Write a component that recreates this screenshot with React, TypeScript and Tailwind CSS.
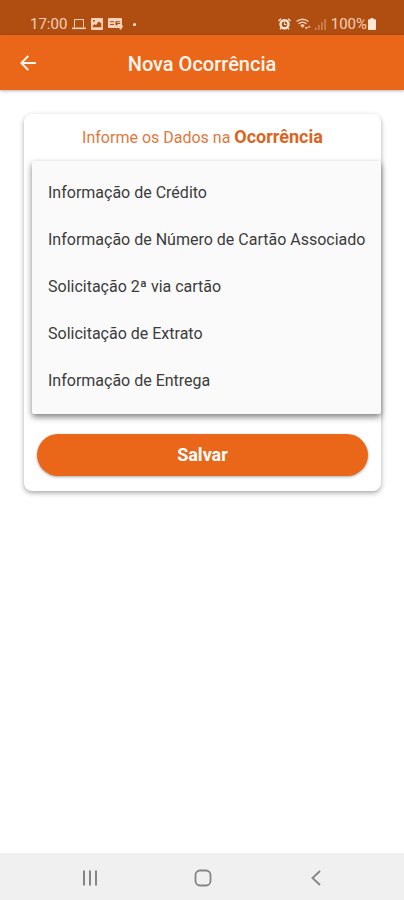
const options = [
  "Informação de Crédito",
  "Informação de Número de Cartão Associado",
  "Solicitação 2ª via cartão",
  "Solicitação de Extrato",
  "Informação de Entrega",
];

function StatusBar() {
  return (
    <div className="flex h-[35px] items-end justify-between bg-[#b04d10] pr-7 pb-[3px] pl-[30px] text-[#f8d2ba]">
      <div className="flex items-center">
        <span className="text-[15px] leading-4">17:00</span>
        {/* laptop */}
        <svg className="ml-[5px] h-3 w-[14px]" viewBox="0 0 14 12" fill="none" stroke="currentColor">
          <path d="M2.5 9V1.5h9V9" />
          <path d="M0 10.3h14" strokeWidth="1.6" />
        </svg>
        {/* picture */}
        <svg className="ml-[5px] h-3 w-3" viewBox="0 0 12 12" fill="currentColor">
          <path
            fillRule="evenodd"
            d="M1 0h10a1 1 0 0 1 1 1v10a1 1 0 0 1-1 1H1a1 1 0 0 1-1-1V1a1 1 0 0 1 1-1ZM1.7 9.3h8.6V5.2L7.4 3.4 5 7.2 3.5 6 1.7 8ZM2 2v1.6h1.8V2Z"
          />
        </svg>
        {/* news card */}
        <svg className="ml-[5px] h-3 w-[15px]" viewBox="0 0 15 12" fill="currentColor">
          <path
            fillRule="evenodd"
            d="M1 0h12a1 1 0 0 1 1 1v6l1 1-2 4-2-2H1a1 1 0 0 1-1-1V1a1 1 0 0 1 1-1ZM2 3.2v1h4v-1ZM2 6v1h4V6ZM7.5 3.2v4h2V6h2.7V4.8H9V4h3.2v-.8Z"
          />
        </svg>
        <span className="ml-[10px] size-[3px] rounded-full bg-[#ffe6d6]" />
      </div>
      <div className="flex items-center">
        {/* alarm clock */}
        <svg className="h-3 w-[13px]" viewBox="0 0 13 12" fill="#ffe6d6">
          <path d="M0 2.4 2.6.2l.9 1L.9 3.4ZM13 2.4 10.4.2l-.9 1 2.6 2.2ZM2.6 9.6l1.1 1-1.2 1.2-1-1ZM10.4 9.6l-1.1 1 1.2 1.2 1-1Z" />
          <path
            fillRule="evenodd"
            d="M6.5 1a5.2 5.2 0 1 1 0 10.4A5.2 5.2 0 0 1 6.5 1Zm0 2.4a2.8 2.8 0 1 0 0 5.6 2.8 2.8 0 0 0 0-5.6ZM6 4.2h1v1.7h1.4v1H6Z"
          />
        </svg>
        {/* wifi */}
        <svg className="ml-[5px] h-3 w-[15px]" viewBox="0 0 15 12" fill="none" stroke="currentColor" strokeWidth="1.4">
          <path d="M.6 3.6a8.6 8.6 0 0 1 11.8 0M2.6 5.7a5.8 5.8 0 0 1 7.8 0" />
          <path d="M4.3 7.2a3.4 3.4 0 0 1 4.4 0L6.5 10Z" fill="currentColor" stroke="none" />
          <path d="M8.8 9l1.6 2.4L12 9ZM11.8 9.5l1.4-2 1.4 2Z" fill="currentColor" stroke="none" />
        </svg>
        {/* signal bars */}
        <svg className="ml-[4px] h-3 w-3 text-[#cf8557]" viewBox="0 0 12 12" fill="currentColor">
          <path d="M0 9.5h1.6V12H0ZM3.1 7h1.6v5H3.1ZM6.2 4h1.6v8H6.2ZM9.3 1h1.6v11H9.3Z" />
        </svg>
        <span className="ml-1 text-[15px] leading-4">100%</span>
        {/* battery */}
        <svg className="ml-px h-3 w-2" viewBox="0 0 8 12" fill="#ffe6d6">
          <path d="M2.5 0h3v1.3H7a1 1 0 0 1 1 1V11a1 1 0 0 1-1 1H1a1 1 0 0 1-1-1V2.3a1 1 0 0 1 1-1h1.5Z" />
        </svg>
      </div>
    </div>
  );
}

function Header() {
  return (
    <header className="grid h-[55px] grid-cols-[56px_1fr_56px] items-center bg-[#ea671a] text-[#fff6ef] shadow-[0_1px_3px_rgba(0,0,0,0.3)]">
      <button type="button" aria-label="Voltar" className="flex h-full items-center justify-center">
        <svg className="size-4" viewBox="0 0 16 16" fill="none" stroke="currentColor" strokeWidth="2">
          <path d="M16 8H1.5M8.2 1 1.3 8l6.9 7" />
        </svg>
      </button>
      <h1 className="pt-[3px] text-center text-xl leading-6 font-medium">Nova Ocorrência</h1>
    </header>
  );
}

function NavBar() {
  return (
    <nav className="grid h-[47px] grid-cols-[1fr_113px_113px_113px_1fr] items-center bg-[#f0f0f0] pt-[3px] pl-[2px] text-[#858585]">
      <button type="button" aria-label="Recentes" className="col-start-2 flex justify-center">
        <svg className="h-4 w-4" viewBox="0 0 16 16" fill="none" stroke="currentColor" strokeWidth="2">
          <path d="M2 .5v15M8 .5v15M14 .5v15" />
        </svg>
      </button>
      <button type="button" aria-label="Início" className="flex justify-center">
        <svg className="size-[18px]" viewBox="0 0 18 18" fill="none" stroke="currentColor" strokeWidth="1.8">
          <rect x="1.5" y="1.5" width="15" height="15" rx="4.5" />
        </svg>
      </button>
      <button type="button" aria-label="Voltar" className="flex justify-center">
        <svg className="h-4 w-[10px]" viewBox="0 0 10 16" fill="none" stroke="currentColor" strokeWidth="1.8">
          <path d="M9 1 1.5 8 9 15" />
        </svg>
      </button>
    </nav>
  );
}

export default function App() {
  return (
    <div className="flex min-h-screen flex-col bg-white font-[Roboto,sans-serif]">
      <StatusBar />
      <Header />

      <main className="flex-1 pt-6 pr-[23px] pl-6">
        <section className="rounded-lg bg-white pb-[15px] shadow-[0_2px_5px_rgba(0,0,0,0.35)]">
          <h2 className="pt-[11px] text-center text-base leading-6 text-[#df7940]">
            Informe os Dados na <strong className="text-lg leading-6 font-bold text-[#dc6420]">Ocorrência</strong>
          </h2>

          {/* open list */}
          <ul
            role="listbox"
            aria-label="Ocorrência"
            className="mt-[11px] ml-2 rounded-xs bg-[#fafafa] pt-2 pb-[10px] shadow-[0_3px_6px_rgba(0,0,0,0.5)]"
          >
            {options.map((option) => (
              <li key={option} role="option" aria-selected={false}>
                <button type="button" className="h-[47px] w-full pl-4 text-left text-base whitespace-nowrap text-[#3c3c3c]">
                  {option}
                </button>
              </li>
            ))}
          </ul>

          <div className="px-[13px] pt-5">
            <button
              type="button"
              className="h-[42px] w-full rounded-full bg-[#ea671a] text-lg font-bold text-white shadow-[0_1px_3px_rgba(0,0,0,0.35)]"
            >
              Salvar
            </button>
          </div>
        </section>
      </main>

      <NavBar />
    </div>
  );
}
